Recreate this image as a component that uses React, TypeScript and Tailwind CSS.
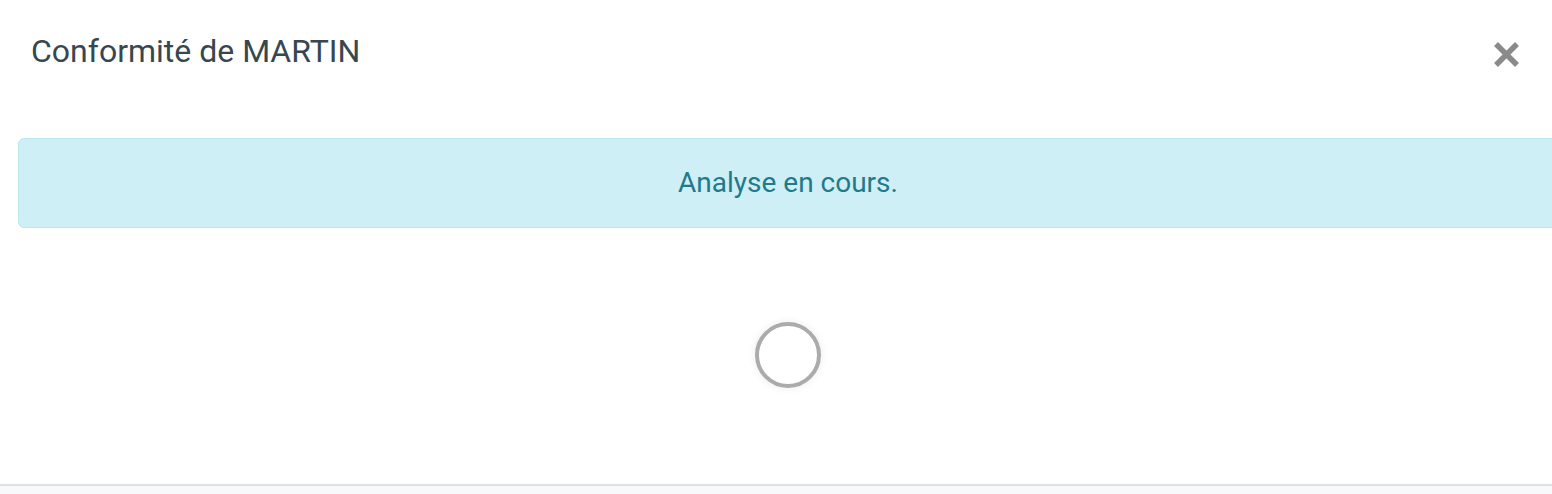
export default function App() {
  return (
    <div className="h-[494px] w-full overflow-hidden bg-white flex flex-col font-['Roboto',sans-serif]">
      {/* en-tête de la modale */}
      <div className="flex items-start justify-between pl-[31px] pr-[32px] pt-[32px]">
        <h5 className="text-[32px] leading-[38px] font-normal text-[#37474f]">
          Conformité de MARTIN
        </h5>
        <button className="mt-[9px] text-[#8a8a8a]" aria-label="Fermer">
          <svg width="27" height="27" viewBox="0 0 27 27">
            <path
              d="M3 3 L24 24 M24 3 L3 24"
              stroke="currentColor"
              strokeWidth="5.5"
              strokeLinecap="butt"
            />
          </svg>
        </button>
      </div>

      {/* corps */}
      <div className="flex-1 ml-[18px] w-[1540px] shrink-0">
        <div className="mt-[68px] h-[90px] rounded-[6px] border border-[#b9e6ef] bg-[#cfeff6] flex items-center justify-center">
          <span className="text-[28px] leading-[32px] text-[#217a8b]">
            Analyse en cours.
          </span>
        </div>

        <div className="mt-[94px] flex justify-center">
          <div className="w-[66px] h-[66px] rounded-full border-[4px] border-[#ababab] shadow-[0_0_6px_2px_rgba(0,0,0,0.05)]" />
        </div>
      </div>

      {/* pied */}
      <div className="h-[10px] shrink-0 border-t-2 border-[#dee2e6] bg-[#f8f9fa]" />
    </div>
  );
}
